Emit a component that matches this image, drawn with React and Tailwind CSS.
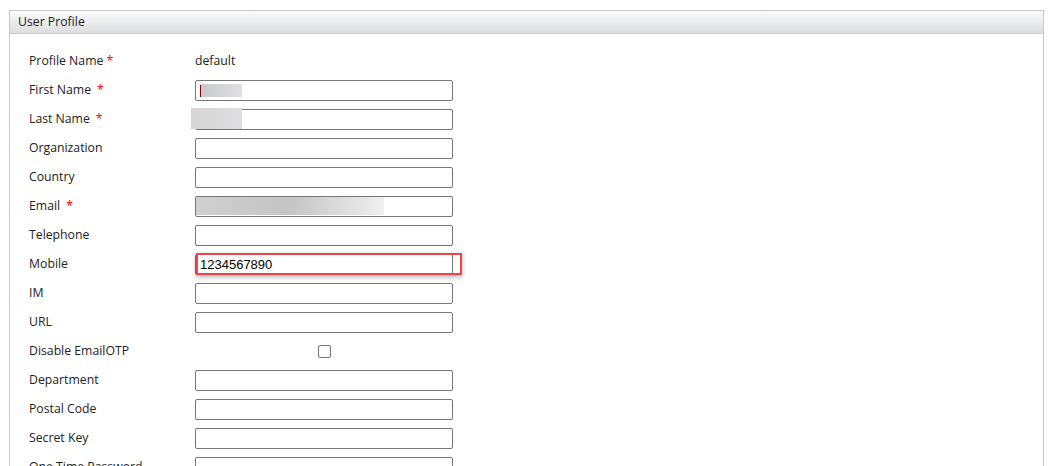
import React from 'react';

const ROWS = [
  { label: 'Profile Name', req: 'tight', kind: 'text', value: 'default' },
  { label: 'First Name', req: 'wide', kind: 'input', blur: 'first' },
  { label: 'Last Name', req: 'wide', kind: 'input', blur: 'last' },
  { label: 'Organization', kind: 'input' },
  { label: 'Country', kind: 'input' },
  { label: 'Email', req: 'wide', kind: 'input', blur: 'email' },
  { label: 'Telephone', kind: 'input' },
  { label: 'Mobile', kind: 'input', value: '1234567890', highlight: true },
  { label: 'IM', kind: 'input' },
  { label: 'URL', kind: 'input' },
  { label: 'Disable EmailOTP', kind: 'check' },
  { label: 'Department', kind: 'input' },
  { label: 'Postal Code', kind: 'input' },
  { label: 'Secret Key', kind: 'input' },
  { label: 'One Time Password', kind: 'input' },
];

function Field({ row }) {
  if (row.kind === 'text') {
    return <span className="pb-[1px] text-[12.25px] text-[#222]">{row.value}</span>;
  }
  if (row.kind === 'check') {
    return (
      <div className="flex w-[258px] justify-center">
        <span className="block h-[13px] w-[13px] rounded-[2px] border border-[#767676] bg-white" />
      </div>
    );
  }
  return (
    <div className="relative">
      <input
        readOnly
        defaultValue={row.value || ''}
        className="block h-[21px] w-[258px] rounded-[2px] border border-[#767676] bg-white px-[4px] font-['Liberation_Sans',Arial,sans-serif] text-[13px] text-black outline-none"
      />
      {row.highlight && (
        <div className="pointer-events-none absolute left-[1px] top-[-1px] h-[22px] w-[266px] border-2 border-[#f2434b] shadow-[0_2px_5px_rgba(0,0,0,0.3)]" />
      )}
      {row.blur === 'first' && (
        <>
          <div className="absolute left-[5px] top-[5px] h-[12px] w-[1px] bg-[#8b0000]" />
          <div className="absolute left-[6px] top-[4px] h-[13px] w-[41px] bg-gradient-to-r from-[#c8c9cc] to-[#e0e0e2]" />
        </>
      )}
      {row.blur === 'last' && (
        <div className="absolute left-[-4px] top-[-1px] h-[21px] w-[51px] bg-gradient-to-r from-[#d6d6d6] to-[#dedee0]" />
      )}
      {row.blur === 'email' && (
        <div className="absolute left-[1px] top-[1px] h-[18px] w-[188px] bg-gradient-to-r from-[#d0d0d0] via-[#c4c4c4] to-[#f0f0f0]" />
      )}
    </div>
  );
}

export default function App() {
  return (
    <div className="h-[466px] w-[1049px] overflow-hidden bg-white pl-[9px] pt-[10px] font-['Open_Sans','Noto_Sans',sans-serif]">
      <div className="h-[470px] w-[1035px] border border-[#c9c9c9] bg-white">
        <div className="flex h-[23px] items-center border-b border-[#c9c9c9] bg-gradient-to-b from-[#fbfbfb] to-[#dcdddf] pl-[8px] text-[12.25px] text-[#222]">
          User Profile
        </div>
        <div className="pl-[19px] pt-[13px]">
          {ROWS.map((row) => (
            <div key={row.label} className="flex h-[29px] items-center">
              <div className="w-[166px] pb-[1px] text-[12.25px] text-[#222]">
                {row.label}
                {row.req === 'tight' && <span className="text-[#e00]"> *</span>}
                {row.req === 'wide' && <span className="ml-[6px] text-[#e00]">*</span>}
              </div>
              <Field row={row} />
            </div>
          ))}
        </div>
      </div>
    </div>
  );
}
